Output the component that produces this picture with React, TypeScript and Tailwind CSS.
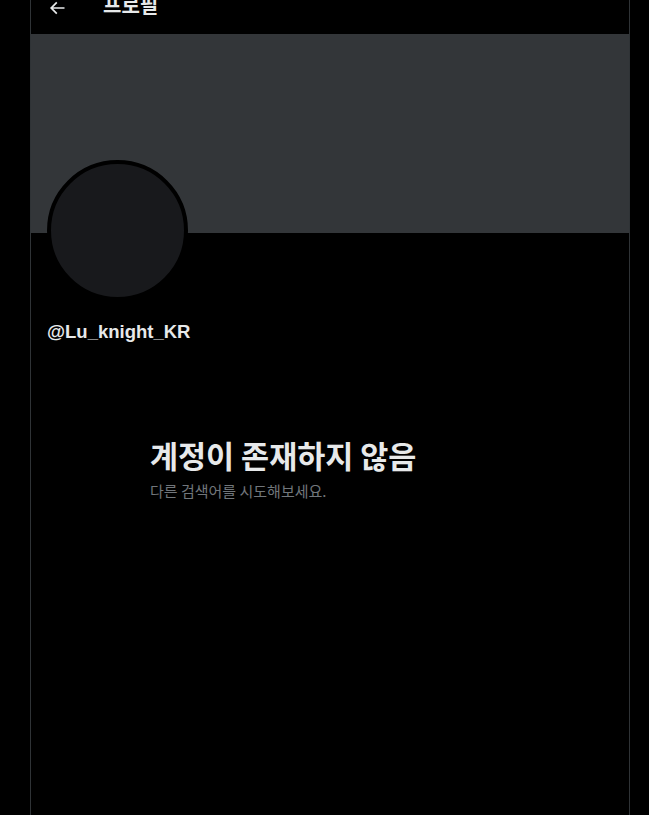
const font = "font-['Liberation_Sans','Noto_Sans_CJK_KR',sans-serif]";
const krFont = "font-['Noto_Sans_CJK_KR','Liberation_Sans',sans-serif]";

export default function App() {
  return (
    <div className={`min-h-[815px] overflow-hidden bg-black text-[#e7e9ea] ${font}`}>
      <main className="ml-[30px] flex min-h-[815px] w-[600px] flex-col border-x border-[#2f3336]">
        {/* header, scrolled partly out of view */}
        <header className="flex h-[34px] items-start">
          <div className="-mt-[2px] flex items-center">
            <button className="ml-[16px] grid size-[20px] place-items-center">
              <svg width="20" height="20" viewBox="0 0 24 24" fill="#e7e9ea">
                <path d="M7.414 13l5.043 5.04-1.414 1.42L3.586 12l7.457-7.46 1.414 1.42L7.414 11H21v2H7.414z" />
              </svg>
            </button>
            <h1 className={`ml-[36px] -mt-[6px] text-[20px] font-bold leading-[24px] ${krFont}`}>
              프로필
            </h1>
          </div>
        </header>

        <div className="h-[199px] bg-[#333639]" />

        <div className="px-[16px]">
          <div className="-mt-[73px] size-[141px] rounded-full border-[4px] border-black bg-[#18191c]" />
          <div className="mt-[20px] text-[18.5px] font-bold leading-[22px]">@Lu_knight_KR</div>
        </div>

        <section className={`mt-[94px] pl-[119px] ${krFont}`}>
          <h2 className="text-[30.5px] font-bold leading-[36px]">계정이 존재하지 않음</h2>
          <p className="mt-[8px] text-[15px] leading-[20px] text-[#71767b]">
            다른 검색어를 시도해보세요.
          </p>
        </section>
      </main>
    </div>
  );
}
